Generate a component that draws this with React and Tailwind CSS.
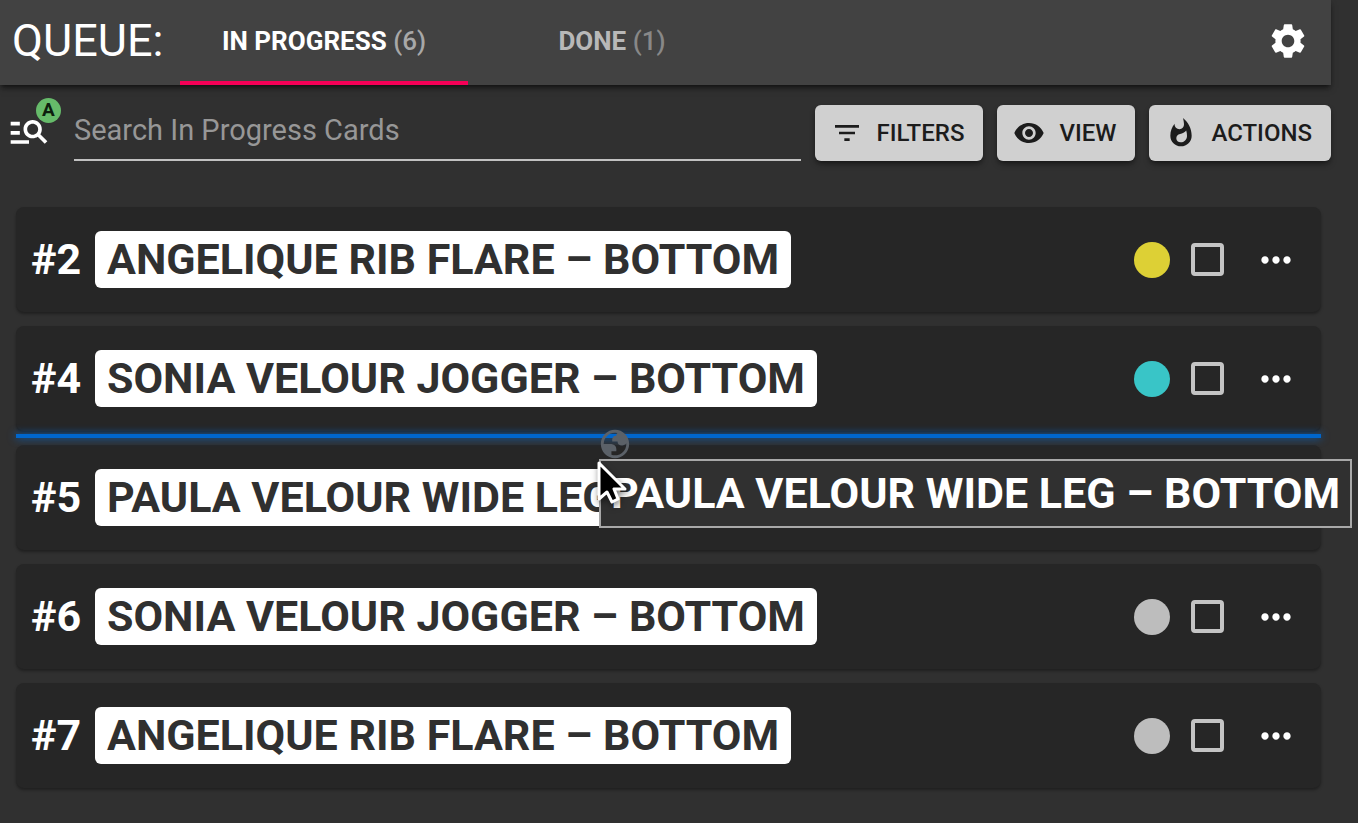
import React, { useState } from "react";
import {
  MdFilterList,
  MdManageSearch,
  MdMoreHoriz,
  MdSettings,
  MdVisibility,
  MdWhatshot,
} from "react-icons/md";

const cards = [
  { id: 2, title: "ANGELIQUE RIB FLARE – BOTTOM", color: "bg-[#ddd035]" },
  { id: 4, title: "SONIA VELOUR JOGGER – BOTTOM", color: "bg-[#39c5c7]" },
  { id: 5, title: "PAULA VELOUR WIDE LEG – BOTTOM", color: "bg-[#bdbdbd]" },
  { id: 6, title: "SONIA VELOUR JOGGER – BOTTOM", color: "bg-[#bdbdbd]" },
  { id: 7, title: "ANGELIQUE RIB FLARE – BOTTOM", color: "bg-[#bdbdbd]" },
];

const dropBeforeId = 5;

function Tab({ label, count, active, onClick }) {
  return (
    <button
      type="button"
      role="tab"
      aria-selected={active}
      onClick={onClick}
      className={`w-72 border-b-4 pt-[2px] text-[26px] font-bold ${
        active ? "border-[#f50057] text-white" : "border-transparent text-[#b8b8b8]"
      }`}
    >
      {label}{" "}
      <span className={`font-medium ${active ? "text-[#a8a8a8]" : "text-[#888888]"}`}>
        ({count})
      </span>
    </button>
  );
}

function ToolButton({ icon: Icon, label }) {
  return (
    <button
      type="button"
      className="flex h-14 items-center gap-[14px] rounded-md bg-[#d0d0d0] pr-[19px] pl-4 text-[24px] font-medium text-[#1c1c1c] shadow-md shadow-black/40"
    >
      <Icon className="size-8" />
      {label}
    </button>
  );
}

function Card({ card }) {
  return (
    <li className="relative flex h-[105px] items-center rounded-lg bg-[#262626] pr-[23px] pl-[15px] shadow-[0_2px_3px_rgba(0,0,0,0.35)]">
      {card.id === dropBeforeId && (
        <div className="absolute inset-x-0 -top-[11px] h-1 bg-[#0066cc] shadow-[0_0_9px_#0066cc]"></div>
      )}
      <span className="w-16 text-[43px] leading-none font-bold text-white">#{card.id}</span>
      <span className="rounded-md bg-white px-3 text-[43px] leading-[57px] font-bold text-[#303030]">
        {card.title}
      </span>
      <span className={`ml-auto size-9 rounded-full ${card.color}`}></span>
      <input
        type="checkbox"
        aria-label={`Select card ${card.id}`}
        className="ml-[21px] size-[33px] appearance-none rounded-sm border-4 border-[#c4c4c4] checked:bg-[#c4c4c4]"
      />
      <button type="button" aria-label={`More options for card ${card.id}`} className="ml-[30px] text-white">
        <MdMoreHoriz className="size-11" />
      </button>
    </li>
  );
}

function DragPreview({ title }) {
  return (
    <div className="pointer-events-none absolute top-[459px] left-[599px] z-10">
      <div className="border-2 border-[#a8a8a8] bg-[#303030] px-[10px] text-[43px] leading-[65px] font-bold whitespace-nowrap text-white">
        {title}
      </div>
      <svg viewBox="0 0 24 24" className="absolute -top-8 -left-px size-[34px] fill-[#5b6168]">
        <path
          fillRule="evenodd"
          d="M12 2c5.523 0 10 4.477 10 10s-4.477 10-10 10S2 17.523 2 12 6.477 2 12 2zM4 12h4.4c3.407.022 4.922 1.73 4.543 5.127H9.488v2.47a8.004 8.004 0 0 0 10.498-8.083C19.327 12.504 18.332 13 17 13c-2.137 0-3.206-.916-3.206-2.75h-3.748c-.274-2.728.683-4.092 2.87-4.092 0-.975.327-1.597.811-1.97A8.004 8.004 0 0 0 4 12z"
        />
      </svg>
      <svg
        viewBox="0 0 32 48"
        className="absolute top-0 -left-[2px] h-12 w-8 drop-shadow-[1px_3px_3px_rgba(0,0,0,0.5)]"
      >
        <path
          d="M2 4V40L10 33L15 43L21 40L17 30H28Z"
          fill="#000"
          stroke="#fff"
          strokeWidth="3"
          strokeLinejoin="round"
        />
      </svg>
    </div>
  );
}

function App() {
  const [tab, setTab] = useState("progress");
  const [search, setSearch] = useState("");

  return (
    <div className="relative min-h-screen overflow-hidden bg-[#303030] pr-[27px] font-[Roboto,sans-serif]">
      <header className="flex h-[85px] bg-[#424242] shadow-md shadow-black/50">
        <h1 className="flex w-[180px] items-center pb-1 pl-3 text-[45px] text-white">QUEUE:</h1>
        <div role="tablist" className="flex">
          <Tab label="IN PROGRESS" count={6} active={tab === "progress"} onClick={() => setTab("progress")} />
          <Tab label="DONE" count={1} active={tab === "done"} onClick={() => setTab("done")} />
        </div>
        <button type="button" aria-label="Settings" className="mr-[22px] ml-auto pb-[3px] text-white">
          <MdSettings className="size-[42px]" />
        </button>
      </header>

      <div className="flex gap-[14px] pt-5 pl-[7px]">
        <button type="button" aria-label="Search mode" className="relative w-[53px] pb-1 text-white">
          <MdManageSearch className="size-[44px]" />
          <span className="absolute -top-[7px] left-[29px] flex size-[25px] items-center justify-center rounded-full bg-[#66bb6a] text-[19px] font-bold text-[#0d1f0e]">
            A
          </span>
        </button>
        <input
          type="text"
          name="search"
          aria-label="Search cards"
          placeholder="Search In Progress Cards"
          className="min-w-0 flex-1 border-b-2 border-[#c1c1c1] bg-transparent pb-[2px] text-[29px] text-white outline-none placeholder:text-[#979797]"
          value={search}
          onChange={(e) => setSearch(e.target.value)}
        />
        <ToolButton icon={MdFilterList} label="FILTERS" />
        <ToolButton icon={MdVisibility} label="VIEW" />
        <ToolButton icon={MdWhatshot} label="ACTIONS" />
      </div>

      <ul className="flex flex-col gap-[14px] pt-[46px] pr-[10px] pb-8 pl-4">
        {cards.map((card) => (
          <Card key={card.id} card={card} />
        ))}
      </ul>

      <DragPreview title="PAULA VELOUR WIDE LEG – BOTTOM" />
    </div>
  );
}

export default App;
